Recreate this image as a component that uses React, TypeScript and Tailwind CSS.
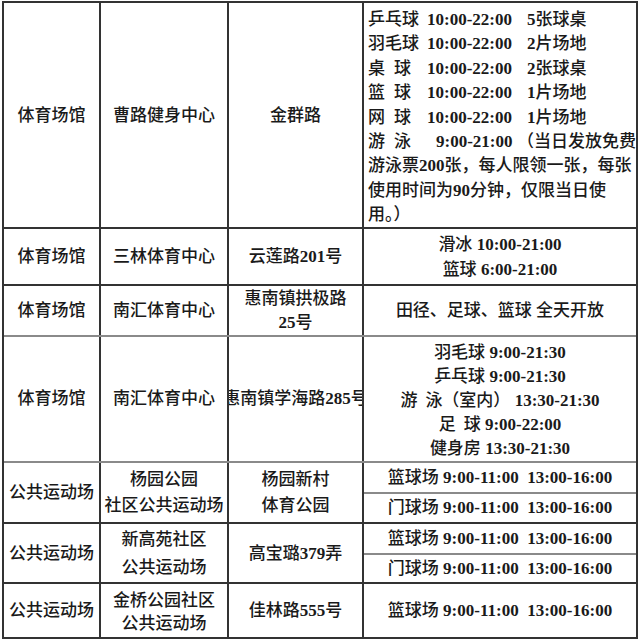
import React from 'react'

/* digits and times are set in bold serif, everything else as plain text */
function T({ s }: { s: string }) {
  const parts = s.split(/([0-9][0-9:\-]*)/)
  return (
    <>
      {parts.map((p, i) =>
        /^[0-9]/.test(p) ? (
          <b key={i} className="font-bold">{p}</b>
        ) : (
          <span key={i}>{p}</span>
        ),
      )}
    </>
  )
}

const ROW = 'grid grid-cols-[97px_128px_135px_272px] border-b-2'
const CELL = 'flex flex-col items-center justify-center text-center border-r-2 border-[#333] whitespace-nowrap overflow-hidden'
const LAST = 'flex flex-col items-center justify-center text-center whitespace-nowrap'

function Cell({ lines, last, cls = '' }: { lines: string[]; last?: boolean; cls?: string }) {
  return (
    <div className={`${last ? LAST : CELL} ${cls}`}>
      {lines.map((l) => (
        <div key={l}><T s={l} /></div>
      ))}
    </div>
  )
}

function Split({ a, b }: { a: string; b: string }) {
  return (
    <div className="flex flex-col whitespace-nowrap">
      <div className="h-[31px] flex items-center justify-center border-b-2 border-[#8a8a8a]">
        <div><T s={a} /></div>
      </div>
      <div className="flex-1 flex items-center justify-center">
        <div><T s={b} /></div>
      </div>
    </div>
  )
}

function Sport({ name, gap, time, extra }: { name: string; gap?: boolean; time: string; extra: string }) {
  return (
    <div className="flex">
      <span className="w-[59px]">
        {gap ? (
          <>
            <span className="mr-[9px]">{name[0]}</span>
            {name[1]}
          </>
        ) : (
          name
        )}
      </span>
      <b className="font-bold w-[100px]">{time}</b>
      <span><T s={extra} /></span>
    </div>
  )
}

export default function App() {
  const sub = '篮球场 9:00-11:00\u00a0\u00a013:00-16:00'
  const gate = '门球场 9:00-11:00\u00a0\u00a013:00-16:00'
  return (
    <div className="w-[640px] h-[640px] bg-white overflow-hidden font-['Liberation_Serif','Noto_Sans_CJK_SC',serif] font-medium text-[17px] text-[#1a1a1a]">
      <div className="ml-[2px] mt-[1px] w-[636px] border-2 border-b-0 border-[#333]">

        {/* 曹路 */}
        <div className={`${ROW} h-[226px] border-[#333]`}>
          <Cell lines={['体育场馆']} />
          <Cell lines={['曹路健身中心']} />
          <Cell lines={['金群路']} />
          <div className="flex flex-col justify-start pt-[5px] pl-[4px] leading-[24.4px] whitespace-nowrap">
            <Sport name="乒乓球" time="10:00-22:00" extra="5张球桌" />
            <Sport name="羽毛球" time="10:00-22:00" extra="2片场地" />
            <Sport name="桌球" gap time="10:00-22:00" extra="2张球桌" />
            <Sport name="篮球" gap time="10:00-22:00" extra="1片场地" />
            <Sport name="网球" gap time="10:00-22:00" extra="1片场地" />
            <div className="flex">
              <span className="w-[59px]"><span className="mr-[9px]">游</span>泳</span>
              <b className="font-bold pl-[9px] w-[90px]">9:00-21:00</b>
              <span>（当日发放免费</span>
            </div>
            <div><T s="游泳票200张，每人限领一张，每张" /></div>
            <div><T s="使用时间为90分钟，仅限当日使" /></div>
            <div>用。）</div>
          </div>
        </div>

        {/* 三林 */}
        <div className={`${ROW} h-[57px] border-[#333] leading-[25px]`}>
          <Cell lines={['体育场馆']} />
          <Cell lines={['三林体育中心']} />
          <Cell lines={['云莲路201号']} />
          <Cell last lines={['滑冰 10:00-21:00', '篮球 6:00-21:00']} />
        </div>

        {/* 南汇 1 */}
        <div className={`${ROW} h-[51px] border-[#8a8a8a] leading-[24px]`}>
          <Cell lines={['体育场馆']} />
          <Cell lines={['南汇体育中心']} />
          <Cell lines={['惠南镇拱极路', '25号']} />
          <Cell last lines={['田径、足球、篮球 全天开放']} />
        </div>

        {/* 南汇 2 */}
        <div className={`${ROW} h-[126px] border-[#8a8a8a] leading-[24px]`}>
          <Cell lines={['体育场馆']} />
          <Cell lines={['南汇体育中心']} />
          <Cell lines={['惠南镇学海路285号']} />
          <div className={`${LAST} pt-[4px]`}>
            <div><T s="羽毛球 9:00-21:30" /></div>
            <div><T s="乒乓球 9:00-21:30" /></div>
            <div><span className="mr-[8px]">游</span><T s="泳（室内） 13:30-21:30" /></div>
            <div><span className="mr-[8px]">足</span><T s="球 9:00-22:00" /></div>
            <div><T s="健身房 13:30-21:30" /></div>
          </div>
        </div>

        {/* 杨园 */}
        <div className={`${ROW} h-[61px] border-[#333] leading-[26px]`}>
          <Cell lines={['公共运动场']} />
          <Cell lines={['杨园公园', '社区公共运动场']} />
          <Cell lines={['杨园新村', '体育公园']} />
          <Split a={sub} b={gate} />
        </div>

        {/* 新高苑 */}
        <div className={`${ROW} h-[60px] border-[#333] leading-[28px]`}>
          <Cell lines={['公共运动场']} />
          <Cell lines={['新高苑社区', '公共运动场']} />
          <Cell lines={['高宝璐379弄']} />
          <Split a={sub} b={gate} />
        </div>

        {/* 金桥 */}
        <div className={`${ROW} h-[55px] border-[#333] leading-[23px]`}>
          <Cell lines={['公共运动场']} />
          <Cell lines={['金桥公园社区', '公共运动场']} cls="pt-[3px]" />
          <Cell lines={['佳林路555号']} />
          <Cell last lines={[sub]} />
        </div>
      </div>
    </div>
  )
}
